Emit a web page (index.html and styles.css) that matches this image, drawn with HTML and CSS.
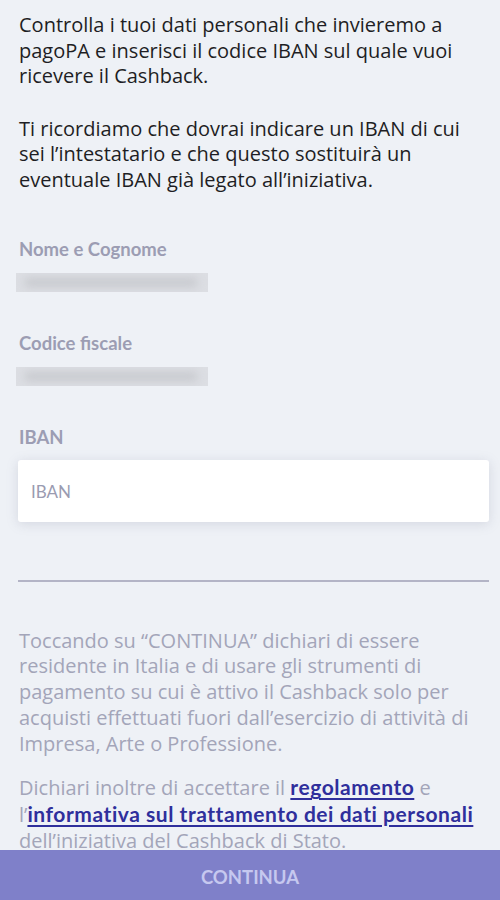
FILE: index.html
```html
<!DOCTYPE html>
<html lang="it">
<head>
<meta charset="utf-8">
<title>IBAN Cashback</title>
<link rel="stylesheet" href="styles.css">
</head>
<body>
<div class="screen">
  <main class="content">
    <p class="intro">Controlla i tuoi dati personali che invieremo a<br>pagoPA e inserisci il codice IBAN sul quale vuoi<br>ricevere il Cashback.</p>
    <p class="intro second">Ti ricordiamo che dovrai indicare un IBAN di cui<br>sei l’intestatario e che questo sostituirà un<br>eventuale IBAN già legato all’iniziativa.</p>

    <div class="field first-field">
      <div class="label">Nome e Cognome</div>
      <div class="redacted"></div>
    </div>
    <div class="field">
      <div class="label">Codice fiscale</div>
      <div class="redacted"></div>
    </div>
    <div class="field">
      <div class="label">IBAN</div>
      <div class="input"><span class="placeholder">IBAN</span></div>
    </div>

    <hr class="divider">

    <p class="note">Toccando su “CONTINUA” dichiari di essere<br>residente in Italia e di usare gli strumenti di<br>pagamento su cui è attivo il Cashback solo per<br>acquisti effettuati fuori dall’esercizio di attività di<br>Impresa, Arte o Professione.</p>
    <p class="note second-note">Dichiari inoltre di accettare il <a href="#" class="link">regolamento</a> e<br>l’<a href="#" class="link">informativa sul trattamento dei dati personali</a><br>dell’iniziativa del Cashback di Stato.</p>
  </main>
  <div class="footer">
    <button class="continue" type="button">CONTINUA</button>
  </div>
</div>
</body>
</html>
```
FILE: styles.css
```css
html, body {
  margin: 0;
  padding: 0;
}
body {
  background: #eef1f6;
  font-family: "Open Sans", Lato, sans-serif;
  color: #1e1e24;
}
.screen {
  height: 900px;
  display: flex;
  flex-direction: column;
  overflow: hidden;
}
.content {
  flex: 1;
  overflow: hidden;
  padding: 0 11px 0 18px;
}
.intro {
  margin: 12px 0 0 1px;
  font-size: 20px;
  line-height: 25.7px;
  white-space: nowrap;
}
.intro.second {
  margin-top: 26.5px;
}
.field {
  margin-top: 40px;
}
.first-field {
  margin-top: 45px;
}
.label {
  font-family: Lato, "Open Sans", sans-serif;
  font-size: 18.5px;
  line-height: 22px;
  font-weight: 700;
  color: #9c9db3;
  margin-left: 1px;
}
.redacted {
  position: relative;
  width: 192px;
  height: 19px;
  margin: 13px 0 0 -2px;
  background: #dcdee3;
  overflow: hidden;
}
.redacted::before {
  content: "";
  position: absolute;
  left: 8px;
  right: 10px;
  top: 5px;
  bottom: 5px;
  border-radius: 6px;
  background: #c7c9ce;
  filter: blur(4px);
}
.input {
  margin-top: 12px;
  height: 62px;
  background: #ffffff;
  border-radius: 3px;
  box-shadow: 0 2px 12px rgba(120, 125, 150, 0.22);
  display: flex;
  align-items: center;
  padding-left: 13px;
}
.placeholder {
  font-family: Lato, "Open Sans", sans-serif;
  font-size: 17px;
  color: #9a9bb1;
  padding-top: 2px;
}
.divider {
  margin: 58px 0 0 0;
  border: 0;
  height: 2px;
  background: #b3b4c6;
}
.note {
  margin: 46px 0 0 1px;
  font-size: 20px;
  line-height: 25.7px;
  color: #a3a5b9;
  white-space: nowrap;
}
.note.second-note {
  margin-top: 18px;
}
.link {
  font-family: Lato, "Open Sans", sans-serif;
  font-size: 21px;
  letter-spacing: 0.55px;
  color: #2f2f9c;
  font-weight: 700;
  text-decoration: underline;
  text-decoration-thickness: 1.5px;
  text-underline-offset: 3px;
}
.footer {
  height: 50px;
  background: #7f80c9;
  display: flex;
}
.continue {
  flex: 1;
  border: 0;
  background: transparent;
  font-family: Lato, "Open Sans", sans-serif;
  font-size: 18.5px;
  font-weight: 700;
  color: #c6c8ef;
  padding: 0;
  padding-top: 3px;
}
```
